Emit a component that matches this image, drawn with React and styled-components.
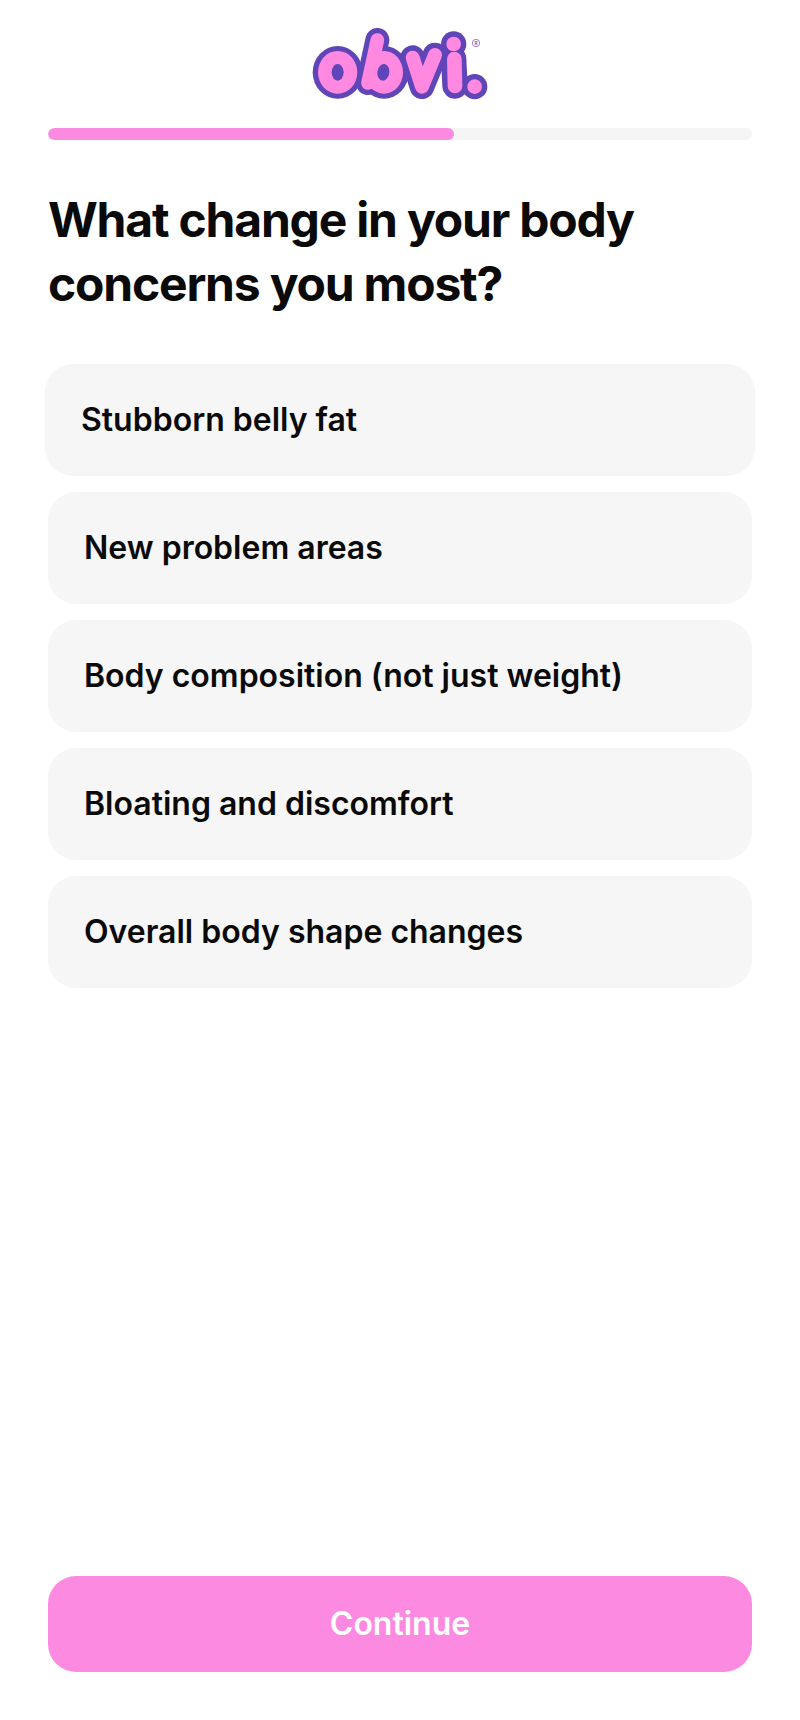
import React, { useState } from "react";
import styled, { createGlobalStyle } from "styled-components";

const GlobalStyle = createGlobalStyle`
  *, *::before, *::after { box-sizing: border-box; }
  body {
    margin: 0;
    background: #ffffff;
    color: #0a0a0a;
    font-family: Inter, "Liberation Sans", sans-serif;
  }
`;

const Page = styled.div`
  min-height: 100vh;
  display: flex;
  flex-direction: column;
  padding: 28px 48px 48px;
`;

const Header = styled.header`
  display: flex;
  flex-direction: column;
  align-items: center;
  gap: 28px;
`;

const LogoArt = styled.svg`
  display: block;
  width: 176px;
  height: 72px;
`;

const ProgressTrack = styled.div`
  width: 100%;
  height: 12px;
  border-radius: 6px;
  background: #f5f5f5;
  overflow: hidden;
`;

const ProgressFill = styled.div`
  height: 100%;
  border-radius: 6px;
  background: #fc8ae0;
`;

const Main = styled.main`
  display: flex;
  flex-direction: column;
  gap: 48px;
  padding: 48px 0;
`;

const Question = styled.h1`
  margin: 0;
  font-size: 48px;
  line-height: 64px;
  font-weight: 700;
  letter-spacing: -0.025em;
`;

const Options = styled.div`
  display: flex;
  flex-direction: column;
  gap: 16px;
`;

const Option = styled.button`
  min-height: 112px;
  margin: ${({ $active }) => ($active ? "0 -3px" : "0")};
  padding: 32px 36px;
  border: 0;
  border-radius: 28px;
  background: #f6f6f6;
  color: inherit;
  font: 600 32px/48px Inter, "Liberation Sans", sans-serif;
  text-align: left;
  cursor: pointer;
`;

const Footer = styled.footer`
  display: flex;
  margin-top: auto;
`;

const ContinueButton = styled.button`
  flex: 1;
  min-height: 96px;
  padding: 24px;
  border: 0;
  border-radius: 28px;
  background: #fc8ae0;
  color: #ffffff;
  font: 600 32px/48px Inter, "Liberation Sans", sans-serif;
  cursor: pointer;
`;

const PINK = "#ff89e0";
const PURPLE = "#5f45b8";

function Logo() {
  return (
    <LogoArt viewBox="36 39 528 216" role="img" aria-label="obvi.">
      <g fill={PURPLE} stroke={PURPLE} strokeLinecap="round" strokeLinejoin="round">
        <ellipse cx="113" cy="172" rx="75" ry="79" stroke="none" />
        <ellipse cx="252" cy="172" rx="74" ry="79" stroke="none" />
        <line x1="232" y1="75" x2="204" y2="204" strokeWidth="72" />
        <polyline points="338,128 366,215 405,120" strokeWidth="74" />
        <circle cx="461" cy="87" r="38" stroke="none" />
        <line x1="461" y1="132" x2="465" y2="213" strokeWidth="76" />
        <circle cx="524" cy="215" r="38" stroke="none" />
      </g>
      <g fill={PINK} stroke={PINK} strokeLinecap="round" strokeLinejoin="round">
        <ellipse cx="113" cy="172" rx="59" ry="64" stroke="none" />
        <ellipse cx="252" cy="172" rx="57" ry="64" stroke="none" />
        <line x1="232" y1="75" x2="204" y2="204" strokeWidth="41" />
        <polyline points="338,128 366,215 405,120" strokeWidth="42" fill="none" />
        <circle cx="461" cy="87" r="22" stroke="none" />
        <line x1="463" y1="132" x2="465" y2="213" strokeWidth="44" />
        <circle cx="524" cy="215" r="22" stroke="none" />
      </g>
      <g fill={PURPLE}>
        <ellipse cx="113" cy="172" rx="18" ry="25" />
        <ellipse cx="250" cy="172" rx="18" ry="25" transform="rotate(8 250 172)" />
      </g>
      <circle cx="528" cy="84" r="11" fill="none" stroke={PURPLE} strokeWidth="2" />
      <text
        x="528"
        y="89"
        textAnchor="middle"
        fontFamily="Inter, sans-serif"
        fontSize="14"
        fontWeight="600"
        fill={PURPLE}
      >
        R
      </text>
    </LogoArt>
  );
}

const OPTIONS = [
  "Stubborn belly fat",
  "New problem areas",
  "Body composition (not just weight)",
  "Bloating and discomfort",
  "Overall body shape changes",
];

const STEP = 15;
const STEP_COUNT = 26;

export default function App() {
  const [active, setActive] = useState(0);
  return (
    <>
      <GlobalStyle />
      <Page>
        <Header>
          <Logo />
          <ProgressTrack
            role="progressbar"
            aria-label="Quiz progress"
            aria-valuemin={0}
            aria-valuemax={STEP_COUNT}
            aria-valuenow={STEP}
          >
            <ProgressFill style={{ width: `${(STEP / STEP_COUNT) * 100}%` }} />
          </ProgressTrack>
        </Header>
        <Main>
          <Question id="question">What change in your body concerns you most?</Question>
          <Options role="group" aria-labelledby="question">
            {OPTIONS.map((label, index) => (
              <Option
                key={label}
                type="button"
                $active={index === active}
                aria-pressed={index === active}
                onClick={() => setActive(index)}
              >
                {label}
              </Option>
            ))}
          </Options>
        </Main>
        <Footer>
          <ContinueButton type="button">Continue</ContinueButton>
        </Footer>
      </Page>
    </>
  );
}
